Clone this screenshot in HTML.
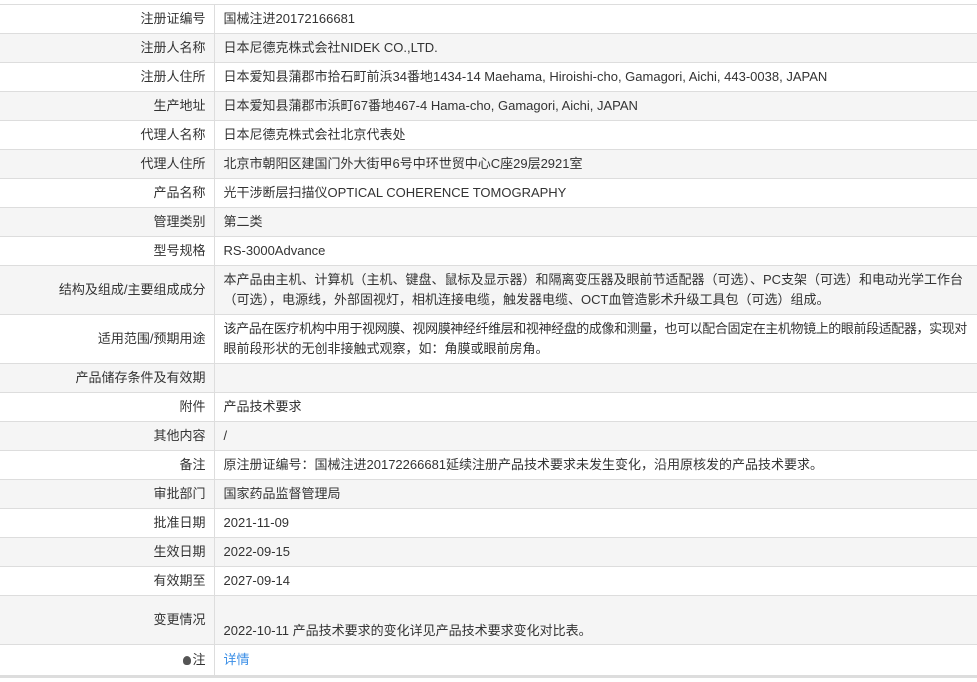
<!DOCTYPE html>
<html><head><meta charset="utf-8"><style>
body{margin:0;background:#fff;font-family:"Liberation Sans","Noto Sans CJK SC",sans-serif;font-size:13px;color:#333;overflow:hidden}
table{position:absolute;left:0;top:4px;width:977px;border-collapse:collapse;border-bottom:3px solid #ddd;table-layout:fixed}
td{border-top:1px solid #ddd;padding:0;height:28px;line-height:20px;vertical-align:middle;overflow:hidden}
td.l{text-align:right;padding-right:8px;border-right:1px solid #ddd}
td.v{padding-left:9px;padding-right:0}
tr:nth-child(even) td{background:#f5f5f5}
tr.t td{height:48px}
a{color:#3a8ee6;text-decoration:none}
</style></head><body>
<table>
<colgroup><col style="width:214px"><col style="width:763px"></colgroup>
<tr><td class="l">注册证编号</td><td class="v">国械注进20172166681</td></tr>
<tr><td class="l">注册人名称</td><td class="v">日本尼德克株式会社NIDEK CO.,LTD.</td></tr>
<tr><td class="l">注册人住所</td><td class="v">日本爱知县蒲郡市拾石町前浜34番地1434-14 Maehama, Hiroishi-cho, Gamagori, Aichi, 443-0038, JAPAN</td></tr>
<tr><td class="l">生产地址</td><td class="v">日本爱知县蒲郡市浜町67番地467-4 Hama-cho, Gamagori, Aichi, JAPAN</td></tr>
<tr><td class="l">代理人名称</td><td class="v">日本尼德克株式会社北京代表处</td></tr>
<tr><td class="l">代理人住所</td><td class="v">北京市朝阳区建国门外大街甲6号中环世贸中心C座29层2921室</td></tr>
<tr><td class="l">产品名称</td><td class="v">光干涉断层扫描仪OPTICAL COHERENCE TOMOGRAPHY</td></tr>
<tr><td class="l">管理类别</td><td class="v">第二类</td></tr>
<tr><td class="l">型号规格</td><td class="v">RS-3000Advance</td></tr>
<tr class="t"><td class="l">结构及组成/主要组成成分</td><td class="v"><span style="white-space:nowrap">本产品由主机、计算机（主机、键盘、鼠标及显示器）和隔离变压器及眼前节适配器（可选）、PC支架（可选）和电动光学工作台</span><br>（可选），电源线，外部固视灯，相机连接电缆，触发器电缆、OCT血管造影术升级工具包（可选）组成。</td></tr>
<tr class="t"><td class="l">适用范围/预期用途</td><td class="v"><span style="white-space:nowrap;letter-spacing:-0.4px">该产品在医疗机构中用于视网膜、视网膜神经纤维层和视神经盘的成像和测量，也可以配合固定在主机物镜上的眼前段适配器，实现对</span><br>眼前段形状的无创非接触式观察，如：角膜或眼前房角。</td></tr>
<tr><td class="l">产品储存条件及有效期</td><td class="v"></td></tr>
<tr><td class="l">附件</td><td class="v">产品技术要求</td></tr>
<tr><td class="l">其他内容</td><td class="v">/</td></tr>
<tr><td class="l">备注</td><td class="v">原注册证编号：国械注进20172266681延续注册产品技术要求未发生变化，沿用原核发的产品技术要求。</td></tr>
<tr><td class="l">审批部门</td><td class="v">国家药品监督管理局</td></tr>
<tr><td class="l">批准日期</td><td class="v">2021-11-09</td></tr>
<tr><td class="l">生效日期</td><td class="v">2022-09-15</td></tr>
<tr><td class="l">有效期至</td><td class="v">2027-09-14</td></tr>
<tr><td class="l" style="height:49px;vertical-align:top;padding-top:14px;box-sizing:border-box">变更情况</td><td class="v" style="height:49px;vertical-align:bottom;padding-bottom:3px;box-sizing:border-box">2022-10-11 产品技术要求的变化详见产品技术要求变化对比表。</td></tr>
<tr><td class="l" style="height:30px"><span style="display:inline-block;width:8px;height:9px;background:#555;border-radius:50% 50% 40% 40%;margin-right:1px;vertical-align:-1px"></span>注</td><td class="v" style="height:30px"><a>详情</a></td></tr>
</table>
</body></html>
